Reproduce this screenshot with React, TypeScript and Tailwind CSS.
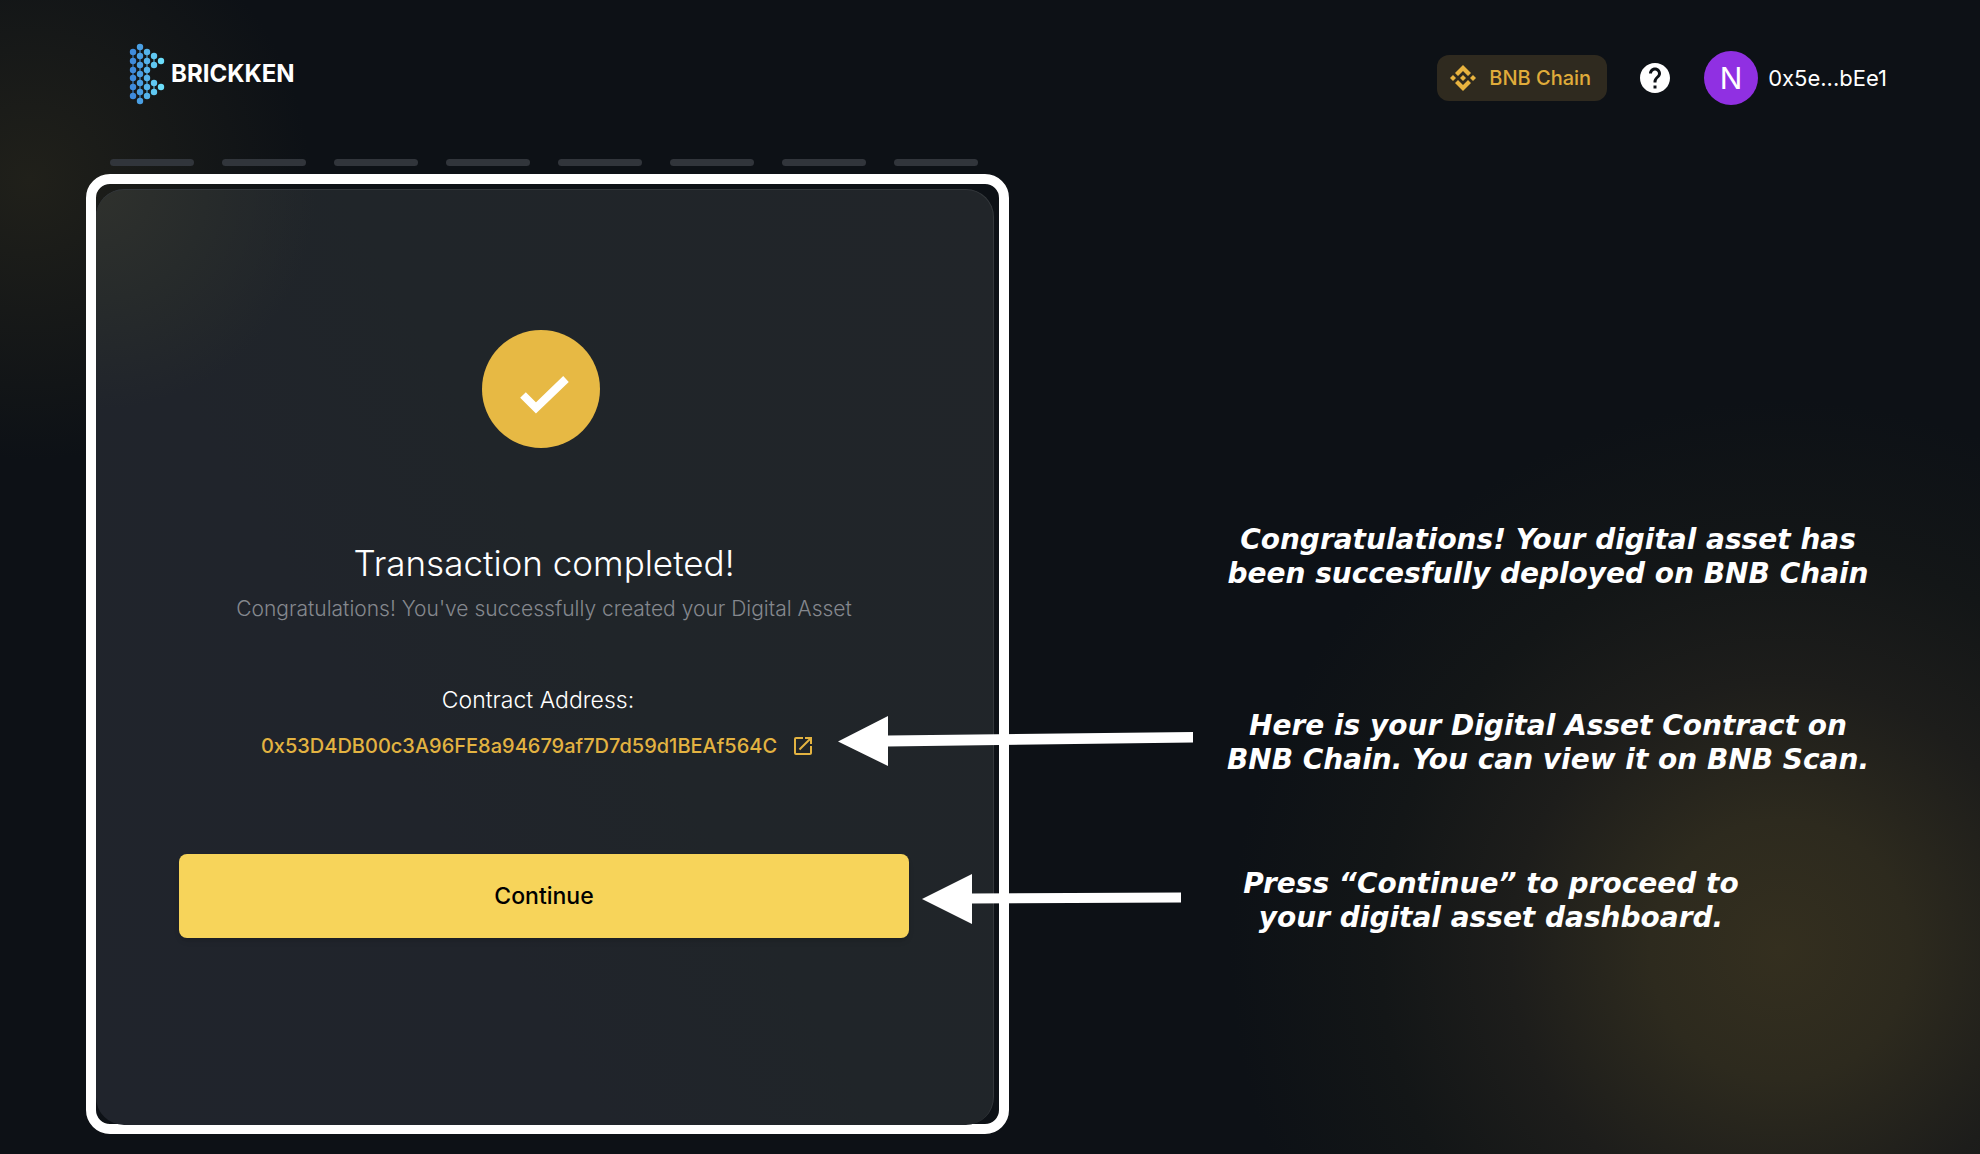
import { MdHelp, MdOpenInNew } from "react-icons/md";

const STEPS = [1, 2, 3, 4, 5, 6, 7, 8];

const DOT_COLUMNS = [
  { x: 4, color: "#3f8bdc", ys: [9, 18, 27, 35, 44, 53] },
  { x: 11, color: "#4a9fe3", ys: [4, 13, 22, 31, 40, 49, 58] },
  { x: 18, color: "#55b3ea", ys: [9, 18, 27, 35, 44, 53] },
  { x: 25, color: "#60c8f2", ys: [13, 22, 40, 49] },
  { x: 32, color: "#6cdefb", ys: [18, 44] },
];

function Logo() {
  return (
    <a href="#" className="flex items-center gap-1.5">
      <svg width="36" height="62" viewBox="0 0 36 62" aria-hidden="true">
        <path d="M4 9V53" stroke="#3f8bdc" strokeWidth="1" />
        <path d="M11 4V58" stroke="#4a9fe3" strokeWidth="1" />
        <path d="M18 9V53" stroke="#55b3ea" strokeWidth="1" />
        <path d="M25 13V22M25 40V49" stroke="#60c8f2" strokeWidth="1" />
        {DOT_COLUMNS.map((c) =>
          c.ys.map((y) => <circle key={`${c.x}-${y}`} cx={c.x} cy={y} r="3.2" fill={c.color} />),
        )}
      </svg>
      <span className="text-2xl leading-none font-bold">BRICKKEN</span>
    </a>
  );
}

function BnbIcon() {
  return (
    <svg width="28" height="28" viewBox="0 0 28 28" fill="#e8b33f" aria-hidden="true">
      <path d="M14 1L22 9L19 12L14 7L9 12L6 9Z" />
      <path d="M14 27L22 19L19 16L14 21L9 16L6 19Z" />
      <path d="M14 11L17 14L14 17L11 14Z" />
      <path d="M4 11L7 14L4 17L1 14Z" />
      <path d="M24 11L27 14L24 17L21 14Z" />
    </svg>
  );
}

function Header() {
  return (
    <header className="flex items-start justify-between pt-[43px] pr-[93px] pl-[129px]">
      <Logo />
      <div className="flex items-center pt-2">
        <button className="flex h-[46px] items-center gap-3 rounded-xl bg-[#2f2a1f] pr-4 pl-3 text-xl leading-none font-medium text-[#e0ac3a]">
          <BnbIcon />
          BNB Chain
        </button>
        <button aria-label="Help" className="ml-[30px]">
          <MdHelp size={36} />
        </button>
        <button className="ml-[31px] flex items-center gap-2.5 text-[22px] leading-none">
          <span className="flex size-[54px] items-center justify-center rounded-full bg-[#9030e2] text-[30px] font-normal">N</span>
          0x5e...bEe1
        </button>
      </div>
    </header>
  );
}

function Card() {
  return (
    <section className="rounded-3xl border-10 border-white pt-[5px] pr-[5px]">
      <div className="-mb-px flex flex-col items-center rounded-[28px] border-t border-r border-[#33373b] bg-[radial-gradient(circle_at_0px_0px,#2f312d_0px,#272b2b_110px,#20242a00_220px),linear-gradient(60deg,#20242c_0%,#20242b_35%,#202529_55%,#212529_100%)] pt-[140px] pr-[84px] pb-[187px] pl-[83px]">
        <svg className="mr-1.5" width="118" height="118" viewBox="0 0 118 118" role="img" aria-label="Completed">
          <circle cx="59" cy="59" r="59" fill="#e7b944" />
          <path d="M41 65L54 78L84 49" fill="none" stroke="#fff" strokeWidth="8" />
        </svg>
        <h1 className="mt-[90px] text-[35px] leading-[50px] font-light">Transaction completed!</h1>
        <p className="mt-[5px] text-[21px] leading-8 font-light text-[#85888e]">
          Congratulations! You've successfully created your Digital Asset
        </p>
        <p className="mt-[59px] mr-3 text-[23px] leading-8 font-light">Contract Address:</p>
        <a href="#" className="mt-[14px] mr-3 flex items-center gap-3.5 text-xl leading-8 font-medium text-[#e3b341]">
          0x53D4DB00c3A96FE8a94679af7D7d59d1BEAf564C
          <MdOpenInNew size={24} />
        </a>
        <button className="mt-[92px] h-[84px] w-full rounded-lg bg-[#f7d45a] text-[23px] font-medium text-black shadow-md">
          Continue
        </button>
      </div>
    </section>
  );
}

function Notes() {
  return (
    <aside className="pt-[364px] pl-[219px] font-['DejaVu_Sans'] text-[28px] leading-[34px] font-bold text-white italic">
      <div className="flex w-[640px] flex-col items-center text-center whitespace-nowrap">
        <p>
          Congratulations! Your digital asset has
          <br />
          been succesfully deployed on BNB Chain
        </p>
        <p className="mt-[118px]">
          Here is your Digital Asset Contract on
          <br />
          BNB Chain. You can view it on BNB Scan.
        </p>
        <p className="mt-[90px] mr-[114px]">
          Press “Continue” to proceed to
          <br />
          your digital asset dashboard.
        </p>
      </div>
    </aside>
  );
}

export default function App() {
  return (
    <div className="min-h-screen overflow-hidden bg-[#0d1116] bg-[radial-gradient(circle_at_1780px_950px,#342f1f_0px,#2d2a1e_130px,#1d1d1b_270px,#131617_400px,#0d111600_550px),radial-gradient(circle_at_30px_180px,#20201a_0px,#0d111600_280px)] font-['Inter'] text-white">
      <Header />
      <div className="grid grid-cols-[923fr_971fr] pt-[54px] pl-[86px]">
        <main className="relative">
          <div className="mb-2 flex gap-7 pr-[31px] pl-6">
            {STEPS.map((s) => (
              <span key={s} className="h-[7px] flex-1 rounded-full bg-[#31353b]" />
            ))}
          </div>
          <Card />
          <svg className="absolute top-[557px] left-[752px]" width="356" height="50" viewBox="0 0 356 50" fill="#fff" aria-hidden="true">
            <path d="M0 25.500L50 0V19.500L355 16V26.500L50 30.500V50Z" />
          </svg>
          <svg className="absolute top-[715px] left-[836px]" width="260" height="50" viewBox="0 0 260 50" fill="#fff" aria-hidden="true">
            <path d="M0 25L50 0V19.500L259 18.500V28.500L50 29.500V50Z" />
          </svg>
        </main>
        <Notes />
      </div>
    </div>
  );
}
